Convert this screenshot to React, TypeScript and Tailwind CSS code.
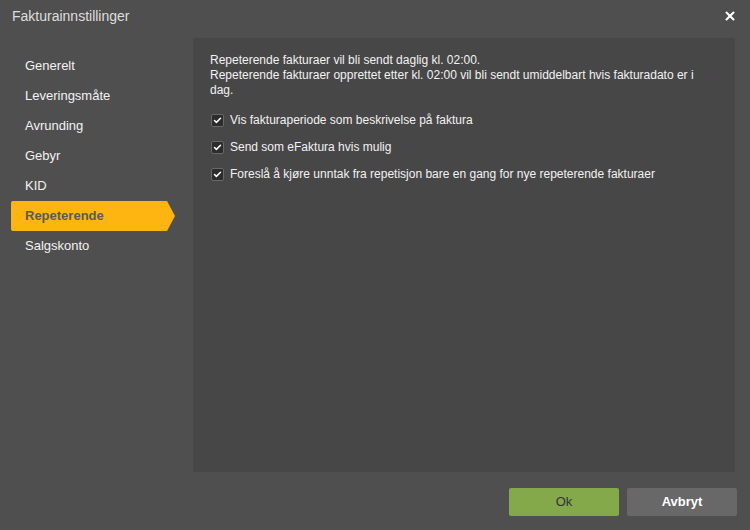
import { Check, X } from 'lucide-react'

const menu = ['Generelt', 'Leveringsmåte', 'Avrunding', 'Gebyr', 'KID', 'Repeterende', 'Salgskonto']
const options = [
  'Vis fakturaperiode som beskrivelse på faktura',
  'Send som eFaktura hvis mulig',
  'Foreslå å kjøre unntak fra repetisjon bare en gang for nye repeterende fakturaer',
]

export default function App() {
  const active = 'Repeterende'

  return (
    <div className="flex flex-col w-[750px] h-[530px] bg-[#4f4f4f] text-[#f2f2f2] font-['Liberation_Sans',Arial,sans-serif] overflow-hidden">
      <div className="flex items-center justify-between h-[32px] pl-[12px] pr-[13px]">
        <span className="text-[14px] text-[#dedede]">Fakturainnstillinger</span>
        <X className="w-[14px] h-[14px] text-white" strokeWidth={3.5} aria-hidden="true" />
      </div>

      <div className="flex flex-1 mt-[6px] min-h-0">
        <nav className="w-[193px] shrink-0 pl-[11px] pt-[13px]">
          {menu.map((item) =>
            item === active ? (
              <div
                key={item}
                className="flex items-center h-[30px] w-[164px] pl-[14px] rounded-l-[2px] bg-[#ffb511] text-[#5a5a5a] text-[13px] font-bold [clip-path:polygon(0_0,calc(100%-8px)_0,100%_50%,calc(100%-8px)_100%,0_100%)]"
              >
                {item}
              </div>
            ) : (
              <div key={item} className="flex items-center h-[30px] pl-[14px] text-[13px]">
                {item}
              </div>
            )
          )}
        </nav>

        <section className="flex-1 mr-[15px] bg-[#474747] pl-[17px] pr-[20px] pt-[15px] text-[12px] leading-[15px]">
          <p>Repeterende fakturaer vil bli sendt daglig kl. 02:00.</p>
          <p>Repeterende fakturaer opprettet etter kl. 02:00 vil bli sendt umiddelbart hvis fakturadato er i dag.</p>

          <div className="flex flex-col gap-[12px] mt-[15px]">
            {options.map((label) => (
              <label key={label} className="flex items-center gap-[6px] h-[15px] pl-[1px]">
                <span className="flex items-center justify-center w-[13px] h-[13px] rounded-[2px] bg-[#2c2c2c] border border-[#686868]">
                  <Check className="w-[9px] h-[9px] text-white" strokeWidth={4} aria-hidden="true" />
                </span>
                {label}
              </label>
            ))}
          </div>
        </section>
      </div>

      <div className="flex justify-end gap-[8px] h-[58px] pt-[16px] pr-[13px]">
        <button className="w-[110px] h-[28px] rounded-[2px] bg-[#84a94b] text-[#333333] text-[13px]">Ok</button>
        <button className="w-[110px] h-[28px] rounded-[2px] bg-[#686868] text-white text-[13px] font-bold">Avbryt</button>
      </div>
    </div>
  )
}
